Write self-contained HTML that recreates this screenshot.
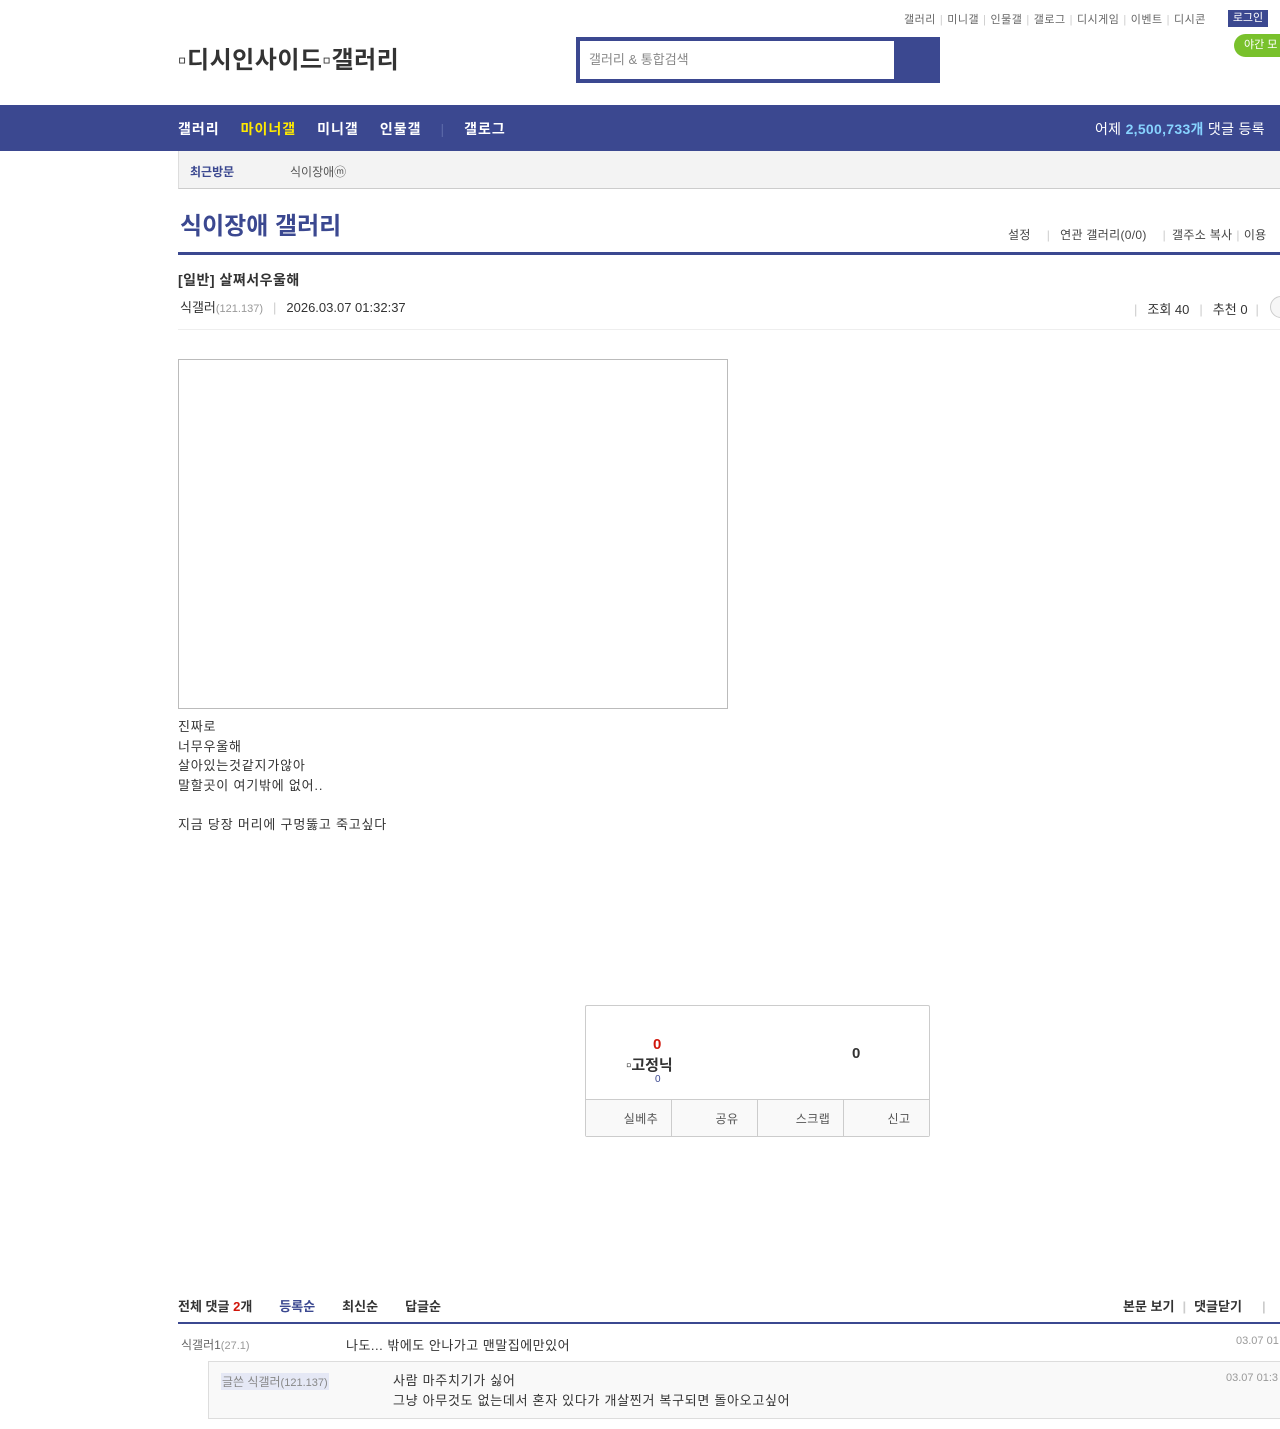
<!DOCTYPE html>
<html><head><meta charset="utf-8"><style>
*{margin:0;padding:0;box-sizing:border-box}
body{width:1280px;height:1429px;overflow:hidden;background:#fff;font-family:"Liberation Sans","Noto Sans CJK KR",sans-serif;color:#333;position:relative}
.a{position:absolute;white-space:nowrap}
.sep{color:#ccc;margin:0 4px}
</style></head><body>
<div class="a" style="left:904px;top:11px;font-size:11px;color:#666;letter-spacing:0.5px">갤러리<span class="sep">|</span>미니갤<span class="sep">|</span>인물갤<span class="sep">|</span>갤로그<span class="sep">|</span>디시게임<span class="sep">|</span>이벤트<span class="sep">|</span>디시콘</div>
<div class="a" style="left:1228px;top:10px;width:40px;height:17px;background:#3b4890;color:#fff;font-size:11px;text-align:center;line-height:17px">로그인</div>
<div class="a" style="left:1234px;top:34px;width:60px;height:23px;background:#79c12c;border-radius:12px;color:#fff;font-size:11px;line-height:23px;padding-left:10px">야간 모</div>
<div class="a" style="left:178px;top:40px;font-size:24px;font-weight:bold;color:#333;letter-spacing:0.5px">▫디시인사이드▫갤러리</div>
<div class="a" style="left:576px;top:37px;width:364px;height:46px;background:#3b4890"></div>
<div class="a" style="left:580px;top:41px;width:314px;height:38px;background:#fff;font-size:13px;color:#888;line-height:38px;padding-left:9px">갤러리 &amp; 통합검색</div>
<div class="a" style="left:0;top:105px;width:1280px;height:46px;background:#3b4890"></div>
<div class="a" style="left:178px;top:119px;font-size:14px;font-weight:bold;color:#fff;letter-spacing:1px">갤러리<span style="color:#ffea00;margin-left:21px">마이너갤</span><span style="margin-left:21px">미니갤</span><span style="margin-left:21px">인물갤</span><span style="color:#5c69a8;margin:0 19px;font-weight:normal">|</span>갤로그</div>
<div class="a" style="left:1095px;top:119px;font-size:14px;color:#fff;letter-spacing:0.3px">어제 <b style="color:#87d3ff">2,500,733개</b> 댓글 등록</div>
<div class="a" style="left:178px;top:151px;width:1102px;height:38px;background:#f3f3f3;border-bottom:1px solid #ccc;border-left:1px solid #ddd"></div>
<div class="a" style="left:190px;top:163px;font-size:12px;font-weight:bold;color:#3b4890">최근방문</div>
<div class="a" style="left:290px;top:163px;font-size:12px;color:#555">식이장애ⓜ</div>
<div class="a" style="left:180px;top:206px;font-size:24px;font-weight:bold;color:#3b4890">식이장애 갤러리</div>
<div class="a" style="left:1008px;top:226px;font-size:12px;color:#444;letter-spacing:0.3px">설정<span class="sep" style="margin:0 10px 0 16px">|</span>연관 갤러리(0/0)<span class="sep" style="margin:0 6px 0 16px">|</span>갤주소 복사<span class="sep">|</span>이용</div>
<div class="a" style="left:178px;top:252px;width:1102px;height:3px;background:#3b4890"></div>
<div class="a" style="left:178px;top:270px;font-size:14px;font-weight:bold;color:#333;letter-spacing:0.5px">[일반] 살쪄서우울해</div>
<div class="a" style="left:180px;top:297px;font-size:13px;color:#333">식갤러<span style="font-size:11px;color:#999">(121.137)</span><span class="sep" style="margin:0 10px">|</span>2026.03.07 01:32:37</div>
<div class="a" style="left:1134px;top:299px;font-size:13px;color:#333"><span class="sep" style="margin:0 10px 0 0">|</span>조회 40<span class="sep" style="margin:0 10px">|</span>추천 0<span class="sep" style="margin:0 8px">|</span></div>
<div class="a" style="left:1270px;top:296px;width:24px;height:22px;border:1px solid #ccc;border-radius:12px;background:#f6f6f6"></div>
<div class="a" style="left:178px;top:329px;width:1102px;height:1px;background:#eee"></div>
<div class="a" style="left:178px;top:359px;width:550px;height:350px;border:1px solid #bbb"></div>
<div class="a" style="left:178px;top:717px;font-size:13px;line-height:19.5px;color:#333;white-space:pre;letter-spacing:0.8px">진짜로
너무우울해
살아있는것같지가않아
말할곳이 여기밖에 없어..

지금 당장 머리에 구멍뚫고 죽고싶다</div>
<div class="a" style="left:585px;top:1005px;width:345px;height:132px;border:1px solid #ccc;border-radius:2px"></div>
<div class="a" style="left:653px;top:1036px;font-size:15px;font-weight:bold;color:#d0160b">0</div>
<div class="a" style="left:626px;top:1054px;font-size:15px;font-weight:bold;color:#333">▫고정닉</div>
<div class="a" style="left:655px;top:1074px;font-size:10px;color:#3b4890">0</div>
<div class="a" style="left:852px;top:1045px;font-size:15px;font-weight:bold;color:#333">0</div>
<div class="a" style="left:586px;top:1099px;width:343px;height:37px;border-top:1px solid #ccc;background:#f9f9f9;display:flex;font-size:12px;color:#555;letter-spacing:0.5px">
<div style="flex:1;border-right:1px solid #ccc;text-align:center;line-height:38px;padding-left:25px">실베추</div>
<div style="flex:1;border-right:1px solid #ccc;text-align:center;line-height:38px;padding-left:25px">공유</div>
<div style="flex:1;border-right:1px solid #ccc;text-align:center;line-height:38px;padding-left:25px">스크랩</div>
<div style="flex:1;text-align:center;line-height:38px;padding-left:25px">신고</div></div>
<div class="a" style="left:178px;top:1296px;font-size:13px;font-weight:bold;color:#333">전체 댓글 <span style="color:#d0160b">2</span>개<span style="color:#3b4890;margin-left:27px">등록순</span><span style="margin-left:27px">최신순</span><span style="margin-left:27px">답글순</span></div>
<div class="a" style="left:1123px;top:1296px;font-size:13px;font-weight:bold;color:#333">본문 보기<span class="sep" style="margin:0 8px">|</span>댓글닫기<span class="sep" style="margin-left:20px">|</span></div>
<div class="a" style="left:178px;top:1322px;width:1102px;height:2px;background:#3b4890"></div>
<div class="a" style="left:181px;top:1336px;font-size:12px;color:#666">식갤러1<span style="font-size:11px;color:#999">(27.1)</span></div>
<div class="a" style="left:346px;top:1335px;font-size:13px;color:#333;letter-spacing:0.5px">나도... 밖에도 안나가고 맨말집에만있어</div>
<div class="a" style="left:1236px;top:1335px;font-size:11px;color:#999">03.07 01</div>
<div class="a" style="left:208px;top:1361px;width:1072px;height:58px;background:#f9f9f9;border:1px solid #ddd;border-right:none"></div>
<div class="a" style="left:221px;top:1373px;font-size:12px;color:#888;background:#e5e8f5;padding:0 1px">글쓴 식갤러<span style="font-size:11px">(121.137)</span></div>
<div class="a" style="left:393px;top:1371px;font-size:13px;line-height:20px;color:#333;letter-spacing:0.7px">사람 마주치기가 싫어<br>그냥 아무것도 없는데서 혼자 있다가 개살찐거 복구되면 돌아오고싶어</div>
<div class="a" style="left:1226px;top:1372px;font-size:11px;color:#999">03.07 01:3</div>
</body></html>
